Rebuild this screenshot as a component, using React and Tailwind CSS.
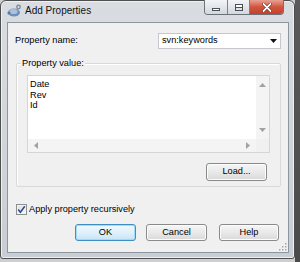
import React from "react";

const font = { fontFamily: '"Liberation Sans", Arial, sans-serif' };

const WinButton = ({ label, primary, className = "" }) => (
  <div
    className={
      "flex items-center justify-center rounded-[3px] border text-[9.2px] text-black " +
      (primary
        ? "border-[#3d8fc4] bg-gradient-to-b from-[#f1f9fe] via-[#e0f1fb] to-[#c6e5f7] shadow-[inset_0_0_0_1px_#9fdcf7] "
        : "border-[#8a8a8a] bg-gradient-to-b from-[#f6f6f6] via-[#e9e9e9] to-[#d9d9d9] shadow-[inset_0_0_0_1px_#fcfcfc] ") +
      className
    }
  >
    {label}
  </div>
);

const Arrow = ({ dir }) => {
  const pts = {
    up: "0,4 3.5,0 7,4",
    down: "0,0 3.5,4 7,0",
    left: "4,0 0,3.5 4,7",
    right: "0,0 4,3.5 0,7",
  }[dir];
  const vertical = dir === "up" || dir === "down";
  return (
    <svg width={vertical ? 7 : 4} height={vertical ? 4 : 7} viewBox={vertical ? "0 0 7 4" : "0 0 4 7"}>
      <polygon points={pts} fill="#a2a2a2" />
    </svg>
  );
};

export default function App() {
  return (
    <div className="w-[300px] h-[262px] bg-[#cfcfcf] flex overflow-hidden" style={font}>
      <div className="w-[295px] h-[259px] flex flex-col bg-gradient-to-b from-[#d9dde1] to-[#c9ced4] border border-[#4f4f4f] rounded-t-[6px] rounded-b-[3px] shadow-[inset_0_0_0_1px_#eef0f2]">
        {/* title bar */}
        <div className="h-[21px] flex items-start shrink-0">
          <div className="mt-[3px] ml-[6px] w-[15px] h-[13px]">
            <svg width="15" height="13" viewBox="0 0 15 13">
              <ellipse cx="7" cy="8.5" rx="6" ry="4" fill="#6f8fb8" />
              <ellipse cx="6.5" cy="7.5" rx="4" ry="2.6" fill="#a9c2de" />
              <circle cx="2" cy="9" r="1.6" fill="#5a7aa3" />
              <circle cx="11.5" cy="3" r="2.4" fill="#7d8a99" />
              <circle cx="11.5" cy="3" r="1" fill="#e6e9ee" />
            </svg>
          </div>
          <div className="mt-[4px] ml-[3px] text-[10px] text-[#111] leading-[12px]">Add Properties</div>
          <div className="flex-1" />
          <div className="-mt-[1px] mr-[10px] flex h-[15px] border border-t-0 border-[#6d7278] rounded-b-[4px] overflow-hidden">
            <div className="w-[23px] flex items-center justify-center bg-gradient-to-b from-[#f2f4f6] to-[#d3d8de] border-r border-[#7c8288]">
              <div className="w-[8px] h-[3px] mt-[4px] bg-white border border-[#4b5058]" />
            </div>
            <div className="w-[22px] flex items-center justify-center bg-gradient-to-b from-[#f2f4f6] to-[#d3d8de] border-r border-[#7c8288]">
              <div className="w-[8px] h-[7px] border border-[#4b5058] bg-white flex items-end">
                <div className="w-full h-[3px] border-t border-[#4b5058] bg-[#dde1e5]" />
              </div>
            </div>
            <div className="w-[33px] flex items-center justify-center bg-gradient-to-b from-[#e8a093] via-[#d0553f] to-[#c6402b]">
              <svg width="10" height="9" viewBox="0 0 10 9">
                <path d="M1.5 1 L8.5 8 M8.5 1 L1.5 8" stroke="#5a1a10" strokeWidth="3" strokeLinecap="round" />
                <path d="M1.5 1 L8.5 8 M8.5 1 L1.5 8" stroke="#ffffff" strokeWidth="1.8" strokeLinecap="round" />
              </svg>
            </div>
          </div>
        </div>

        {/* client area */}
        <div className="relative ml-[6px] w-[282px] h-[231px] bg-[#f0f0f0] border border-[#8d959e] flex flex-col shrink-0">
          {/* property name row */}
          <div className="mt-[10px] h-[16px] flex items-center">
            <div className="ml-[7px] flex-1 text-[9.2px] text-black">Property name:</div>
            <div className="mr-[7px] w-[123px] h-[16px] bg-white border border-[#c4c7cc] flex items-center">
              <span className="ml-[3px] flex-1 text-[9.2px] text-black">svn:keywords</span>
              <svg width="7" height="4" viewBox="0 0 7 4" className="mr-[3px]">
                <polygon points="0,0 7,0 3.5,4" fill="#111" />
              </svg>
            </div>
          </div>

          {/* group box */}
          <div className="relative mt-[14px] ml-[8px] mr-[7px] border border-[#d9d9d9] rounded-[2px] shadow-[inset_1px_1px_0_#ffffff] flex flex-col">
            <div className="absolute -top-[7px] left-[4px] px-[1px] bg-[#f0f0f0] text-[9.2px] leading-[12px] text-black">
              Property value:
            </div>
            <div className="mt-[11px] mx-[10px] h-[78px] border border-[#d4d6d9] bg-white flex flex-col">
              <div className="flex flex-1">
                <div className="flex-1 pl-[2px] pt-[3px] text-[9.2px] leading-[10.5px] text-black">
                  <div>Date</div>
                  <div>Rev</div>
                  <div>Id</div>
                </div>
                <div className="w-[13px] bg-[#f4f4f4] flex flex-col items-center justify-between py-[7px]">
                  <Arrow dir="up" />
                  <Arrow dir="down" />
                </div>
              </div>
              <div className="h-[13px] flex">
                <div className="flex-1 bg-[#f4f4f4] flex items-center justify-between px-[6px]">
                  <Arrow dir="left" />
                  <Arrow dir="right" />
                </div>
                <div className="w-[13px] bg-[#f0f0f0]" />
              </div>
            </div>
            <div className="mt-[10px] mb-[5px] mr-[13px] flex justify-end">
              <WinButton label="Load..." className="w-[61px] h-[18px]" />
            </div>
          </div>

          {/* checkbox */}
          <div className="mt-[17px] ml-[8px] h-[11px] flex items-center">
            <div className="w-[11px] h-[11px] border border-[#8e8f8f] bg-gradient-to-br from-[#dcdcdc] to-[#fbfbfb] flex items-center justify-center shadow-[inset_0_0_0_1px_#f4f4f4]">
              <svg width="9" height="9" viewBox="0 0 9 9">
                <path d="M1.2 4.6 L3.4 7.2 L7.8 1.3" fill="none" stroke="#2a4f8f" strokeWidth="1.6" />
              </svg>
            </div>
            <span className="ml-[2px] text-[9.2px] text-black">Apply property recursively</span>
          </div>

          {/* buttons */}
          <div className="mt-[9px] mr-[9px] flex justify-end">
            <WinButton label="OK" primary className="w-[61px] h-[17px]" />
            <WinButton label="Cancel" className="ml-[10px] w-[61px] h-[17px]" />
            <WinButton label="Help" className="ml-[12px] w-[60px] h-[17px]" />
          </div>

          {/* resize grip */}
          <svg width="8" height="8" viewBox="0 0 8 8" className="absolute right-[1px] bottom-[1px]">
            {[
              [6, 0],
              [6, 3],
              [3, 3],
              [6, 6],
              [3, 6],
              [0, 6],
            ].map(([x, y], i) => (
              <rect key={i} x={x} y={y} width="1.5" height="1.5" fill="#a6a6a6" />
            ))}
          </svg>
        </div>
      </div>
      <div className="flex-1 h-full bg-gradient-to-b from-[#5a5a5a] to-[#4a4a4a]" />
    </div>
  );
}
